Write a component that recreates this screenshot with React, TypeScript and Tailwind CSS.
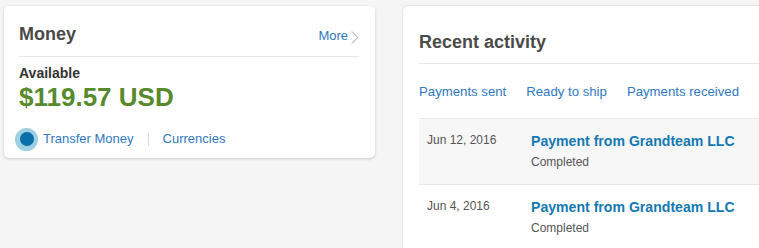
import React from "react";

const rows = [
  { date: "Jun 12, 2016", title: "Payment from Grandteam LLC", status: "Completed", shaded: true },
  { date: "Jun 4, 2016", title: "Payment from Grandteam LLC", status: "Completed", shaded: false },
];

export default function App() {
  return (
    <div
      className="w-[759px] h-[248px] overflow-hidden bg-[#f5f5f5] flex items-start pt-[6px] pl-[4px] gap-[28px]"
      style={{ fontFamily: '"Liberation Sans", Arial, sans-serif' }}
    >
      {/* Money card */}
      <div className="w-[371px] h-[152px] shrink-0 bg-white rounded-[5px] shadow-[0_1px_3px_rgba(0,0,0,0.18)] pl-[15px] pr-[16px] flex flex-col">
        <div className="h-[51px] pt-[18px] border-b border-[#e8e8e8] flex items-baseline justify-between">
          <div className="text-[18px] leading-[20px] font-bold text-[#4a4a4a]">Money</div>
          <div className="flex items-baseline gap-[3px] text-[13px] leading-[16px] text-[#2f79c2]">
            More
            <svg width="8" height="13" viewBox="0 0 8 13" className="self-center translate-y-[1px]">
              <path d="M1 0.5 L6.8 6.5 L1 12.5" fill="none" stroke="#8fa3bb" strokeWidth="1" />
            </svg>
          </div>
        </div>
        <div className="pt-[8px] text-[14px] leading-[16px] font-bold text-[#333333]">Available</div>
        <div className="mt-[1px] text-[26px] leading-[30px] font-bold text-[#578a2c]">$119.57 USD</div>
        <div className="mt-[15px] flex items-center h-[24px] -ml-[4px]">
          <div className="w-[23px] h-[23px] rounded-full bg-[#9fcfe3] flex items-center justify-center">
            <div className="w-[14px] h-[14px] rounded-full bg-[#0a6fa8]" />
          </div>
          <div className="ml-[5px] text-[13px] leading-[16px] text-[#2f79c2]">Transfer Money</div>
          <div className="mx-[14px] w-px h-[13px] bg-[#dddddd]" />
          <div className="text-[13px] leading-[16px] text-[#2f79c2]">Currencies</div>
        </div>
      </div>

      {/* Recent activity card */}
      <div className="w-[420px] h-[260px] shrink-0 bg-white rounded-[5px] shadow-[0_0_2px_rgba(0,0,0,0.2)] pl-[16px] flex flex-col">
        <div className="pt-[26px] pb-[11px] border-b border-[#e8e8e8]">
          <div className="text-[18px] leading-[20px] font-bold text-[#4a4a4a]">Recent activity</div>
        </div>
        <div className="pt-[20px] pb-[18px] border-b border-[#e8e8e8] flex gap-[20px] text-[13.2px] leading-[16px] text-[#2f79c2]">
          <div>Payments sent</div>
          <div>Ready to ship</div>
          <div>Payments received</div>
        </div>
        {rows.map((r, i) => (
          <div
            key={i}
            className={`flex pl-[8px] pt-[13px] pb-[14px] border-b border-[#e8e8e8] ${r.shaded ? "bg-[#f7f7f7]" : "bg-white"}`}
          >
            <div className="w-[104px] text-[12px] leading-[16px] text-[#555555]">{r.date}</div>
            <div className="flex flex-col">
              <div className="text-[14.1px] leading-[18px] font-bold text-[#1479b3]">{r.title}</div>
              <div className="mt-[4px] text-[12px] leading-[16px] text-[#555555]">{r.status}</div>
            </div>
          </div>
        ))}
      </div>
    </div>
  );
}
